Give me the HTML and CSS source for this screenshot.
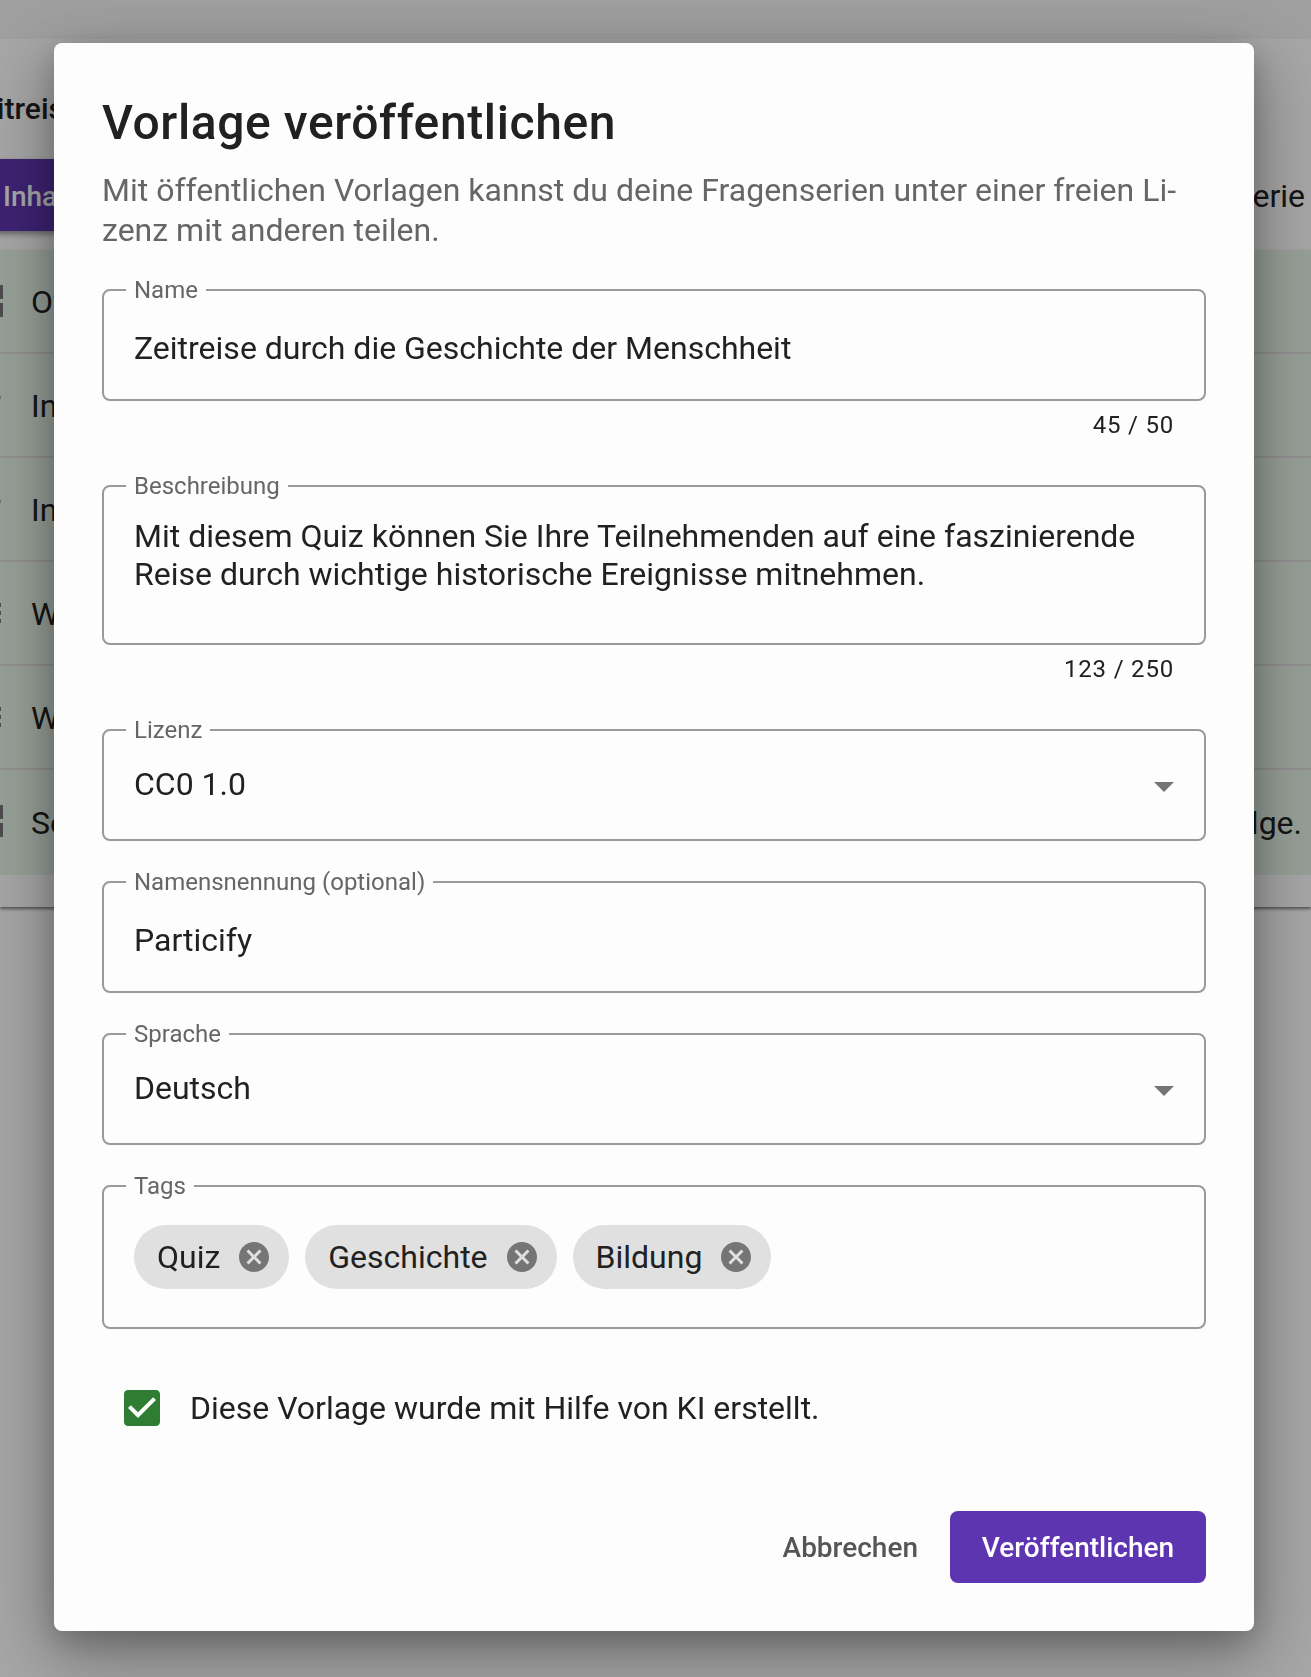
FILE: index.html
```html
<!DOCTYPE html>
<html lang="de">
<head>
<meta charset="utf-8">
<title>Vorlage veröffentlichen</title>
<link rel="stylesheet" href="styles.css">
</head>
<body>
<div class="page">
  <div class="topbar"></div>
  <div class="heading">Zeitreise durch die Geschichte</div>
  <div class="tabs"><div class="tab">Inhalte</div><div class="tab-right">Fragenserie</div></div>
  <div class="card">
    <div class="rows">
      <div class="row"><i class="grip big"></i><span>Offene Frage</span></div>
      <div class="row"><i class="grip mark"></i><span>Info</span></div>
      <div class="row"><i class="grip mark"></i><span>Info</span></div>
      <div class="row"><i class="grip dots"></i><span>Welches Ereignis</span></div>
      <div class="row"><i class="grip dots"></i><span>Wann begann</span></div>
      <div class="row"><i class="grip big"></i><span>Sortiere die Ereignisse</span><span>in die richtige Reihenfolge.</span></div>
    </div>
  </div>
</div>
<div class="backdrop"></div>
<div class="dialog">
  <h2 class="title">Vorlage veröffentlichen</h2>
  <p class="desc">Mit öffentlichen Vorlagen kannst du deine Fragenserien unter einer freien Li-<br>zenz mit anderen teilen.</p>
  <fieldset class="field f-name"><legend>Name</legend><div class="value">Zeitreise durch die Geschichte der Menschheit</div></fieldset>
  <div class="counter">45 / 50</div>
  <fieldset class="field f-desc"><legend>Beschreibung</legend><div class="value multi">Mit diesem Quiz können Sie Ihre Teilnehmenden auf eine faszinierende<br>Reise durch wichtige historische Ereignisse mitnehmen.</div></fieldset>
  <div class="counter">123 / 250</div>
  <fieldset class="field f-sel"><legend>Lizenz</legend><div class="value select">CC0 1.0</div><svg class="arrow" viewBox="0 0 20 10"><path d="M0 0h20L10 10z"/></svg></fieldset>
  <fieldset class="field f-gap"><legend>Namensnennung (optional)</legend><div class="value">Particify</div></fieldset>
  <fieldset class="field f-sel f-gap"><legend>Sprache</legend><div class="value select">Deutsch</div><svg class="arrow" viewBox="0 0 20 10"><path d="M0 0h20L10 10z"/></svg></fieldset>
  <fieldset class="field f-tags"><legend>Tags</legend>
    <div class="chips">
      <div class="chip">Quiz<svg class="del" viewBox="2 2 20 20"><path d="M12 2C6.470 2 2 6.470 2 12s4.470 10 10 10 10-4.470 10-10S17.530 2 12 2zm5 13.590L15.590 17 12 13.410 8.410 17 7 15.590 10.590 12 7 8.410 8.410 7 12 10.590 15.590 7 17 8.410 13.410 12 17 15.590z"/></svg></div>
      <div class="chip">Geschichte<svg class="del" viewBox="2 2 20 20"><path d="M12 2C6.470 2 2 6.470 2 12s4.470 10 10 10 10-4.470 10-10S17.530 2 12 2zm5 13.590L15.590 17 12 13.410 8.410 17 7 15.590 10.590 12 7 8.410 8.410 7 12 10.590 15.590 7 17 8.410 13.410 12 17 15.590z"/></svg></div>
      <div class="chip">Bildung<svg class="del" viewBox="2 2 20 20"><path d="M12 2C6.470 2 2 6.470 2 12s4.470 10 10 10 10-4.470 10-10S17.530 2 12 2zm5 13.590L15.590 17 12 13.410 8.410 17 7 15.590 10.590 12 7 8.410 8.410 7 12 10.590 15.590 7 17 8.410 13.410 12 17 15.590z"/></svg></div>
    </div>
  </fieldset>
  <div class="check-row">
    <svg class="check" viewBox="3 3 18 18"><path d="M19 3H5c-1.110 0-2 .9-2 2v14c0 1.100.89 2 2 2h14c1.110 0 2-.9 2-2V5c0-1.100-.89-2-2-2zm-9 14l-5-5 1.410-1.410L10 14.170l7.590-7.590L19 8l-9 9z"/></svg>
    <span>Diese Vorlage wurde mit Hilfe von KI erstellt.</span>
  </div>
  <div class="actions">
    <button class="btn">Abbrechen</button>
    <button class="btn primary">Veröffentlichen</button>
  </div>
</div>
</body>
</html>
```
FILE: styles.css
```css
* { box-sizing: border-box; }
html, body { margin: 0; height: 1677px; overflow: hidden; }
body { font-family: Roboto, "Liberation Sans", sans-serif; color: #212121; background: #fff; }

.page { width: 1311px; height: 1677px; overflow: hidden; background: #fff; }
.topbar { height: 39px; background: #f5f5f5; }
.heading { height: 120px; line-height: 140px; margin-left: -37px; font-size: 30px; font-weight: 500; white-space: nowrap; }
.tabs { height: 72px; display: flex; justify-content: space-between; align-items: center; }
.tab { height: 72px; width: 400px; margin-left: -20px; padding-left: 23px; line-height: 76px; background: #5e35b1; color: #fff; font-size: 28px; font-weight: 500; box-shadow: 0 3px 6px rgba(0,0,0,.4); }
.tab-right { font-size: 32px; padding: 2px 6px 0 0; }
.card { margin-top: 19px; height: 657px; background: #fff; box-shadow: 0 2px 3px rgba(0,0,0,.5); }
.rows { background: #e8f5e9; }
.row { height: 104px; display: flex; align-items: center; justify-content: space-between; gap: 40px; padding: 1px 9px 0 31px; font-size: 32px; position: relative; border-bottom: 2px solid #ddd; }
.row:last-child { border-bottom: 0; height: 105px; }
.grip { position: absolute; left: 0; top: 35px; width: 3px; height: 32px; }
.grip.big { background: repeating-linear-gradient(#767676 0 14px, transparent 14px 18px); }
.grip.dots { top: 41px; width: 1px; height: 20px; background: repeating-linear-gradient(#767676 0 4px, transparent 4px 8px); }
.grip.mark { top: 42px; width: 1px; height: 3px; background: #aaa; }

.backdrop { position: fixed; inset: 0; background: rgba(0,0,0,.35); }
.dialog { position: fixed; left: 54px; top: 43px; width: 1200px; height: 1588px; padding: 49px 48px 48px; background: #fdfdfd; border-radius: 8px; box-shadow: 0 22px 70px 6px rgba(0,0,0,.3), 0 10px 30px rgba(0,0,0,.2); }

.title { margin: 0; font-size: 48px; line-height: 62px; font-weight: 500; letter-spacing: .6px; color: #212121; }
.desc { margin: 16px 0 0; font-size: 32px; line-height: 40px; color: #666; }

.field { display: block; margin: 0; min-width: 0; padding: 0 30px; border: 2px solid #9a9a9a; border-radius: 8px; position: relative; height: 125px; }
.field legend { margin-left: -8px; padding: 0 8px; font-size: 24px; line-height: 28px; color: #666; }
.f-name { margin-top: 26px; }
.f-desc { margin-top: 33px; height: 173px; }
.f-sel { margin-top: 33px; }
.f-gap { margin-top: 27px; }
.f-tags { margin-top: 27px; height: 157px; }
.value { font-size: 32px; line-height: 38px; color: #212121; padding-top: 25px; }
.value.select { padding-top: 21px; }
.value.multi { padding-top: 17px; }
.counter { text-align: right; padding-right: 32px; margin-top: 10px; font-size: 24px; line-height: 28px; letter-spacing: .8px; color: #212121; }
.arrow { position: absolute; right: 30px; top: 38px; width: 20px; height: 10px; fill: #757575; }

.chips { display: flex; gap: 16px; padding-top: 25px; }
.chip { height: 64px; display: flex; align-items: center; gap: 19px; padding: 0 20px 0 23px; border-radius: 32px; background: #e0e0e0; font-size: 32px; }
.del { width: 30px; height: 30px; fill: #757575; }

.check-row { display: flex; align-items: center; gap: 30px; margin: 60px 0 0 22px; font-size: 32px; }
.check { width: 36px; height: 36px; flex: none; fill: #2e7d32; }

.actions { display: flex; justify-content: flex-end; margin-top: 84px; }
.btn { height: 72px; padding: 0 32px; border: 0; border-radius: 8px; background: transparent; font-family: inherit; font-size: 28px; font-weight: 500; color: #555; }
.btn.primary { background: #5e35b1; color: #fff; width: 256px; padding: 0; }
```
